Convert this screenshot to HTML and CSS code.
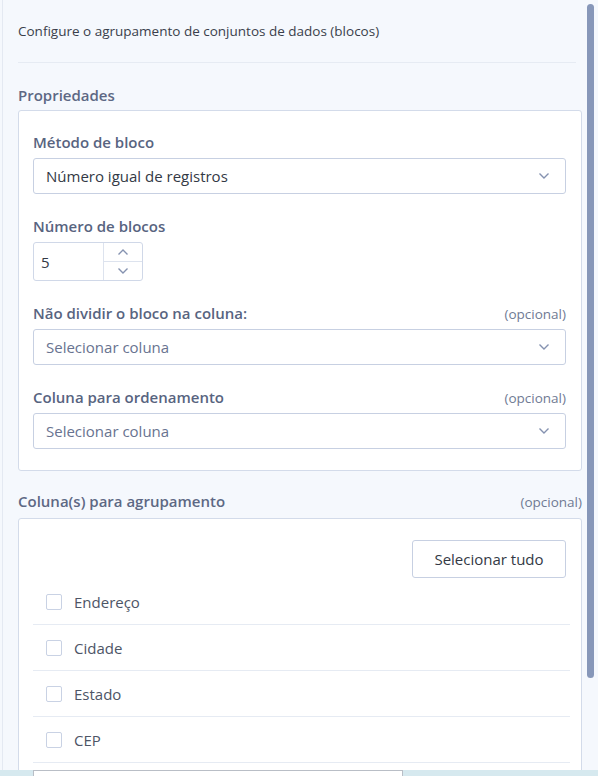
FILE: index.html
```html
<!DOCTYPE html>
<html lang="pt">
<head>
    <meta charset="UTF-8">
    <meta name="viewport" content="width=device-width, initial-scale=1.0">
    <title>Agrupamento em blocos</title>
    <link rel="stylesheet" href="styles.css">
</head>
<body>
    <div class="panel">
        <div class="panel-inner">
            <p class="intro">Configure o agrupamento de conjuntos de dados (blocos)</p>

            <h3 class="section-title">Propriedades</h3>
            <div class="box props">
                <div class="field">
                    <label class="field-label">Método de bloco</label>
                    <div class="select">
                        <span class="select-value">Número igual de registros</span>
                        <svg class="chevron" width="12" height="8" viewBox="0 0 12 8"><path d="M1.5 1.5 L6 6 L10.5 1.5" fill="none" stroke="#8592b0" stroke-width="1.4"/></svg>
                    </div>
                </div>

                <div class="field">
                    <label class="field-label">Número de blocos</label>
                    <div class="spinner">
                        <span class="spinner-value">5</span>
                        <div class="spinner-buttons">
                            <span class="spin-btn"><svg width="12" height="8" viewBox="0 0 12 8"><path d="M1.5 6.5 L6 2 L10.5 6.5" fill="none" stroke="#8592b0" stroke-width="1.4"/></svg></span>
                            <span class="spin-btn"><svg width="12" height="8" viewBox="0 0 12 8"><path d="M1.5 1.5 L6 6 L10.5 1.5" fill="none" stroke="#8592b0" stroke-width="1.4"/></svg></span>
                        </div>
                    </div>
                </div>

                <div class="field">
                    <div class="label-row">
                        <label class="field-label">Não dividir o bloco na coluna:</label>
                        <span class="optional">(opcional)</span>
                    </div>
                    <div class="select">
                        <span class="select-value placeholder">Selecionar coluna</span>
                        <svg class="chevron" width="12" height="8" viewBox="0 0 12 8"><path d="M1.5 1.5 L6 6 L10.5 1.5" fill="none" stroke="#8592b0" stroke-width="1.4"/></svg>
                    </div>
                </div>

                <div class="field">
                    <div class="label-row">
                        <label class="field-label">Coluna para ordenamento</label>
                        <span class="optional">(opcional)</span>
                    </div>
                    <div class="select">
                        <span class="select-value placeholder">Selecionar coluna</span>
                        <svg class="chevron" width="12" height="8" viewBox="0 0 12 8"><path d="M1.5 1.5 L6 6 L10.5 1.5" fill="none" stroke="#8592b0" stroke-width="1.4"/></svg>
                    </div>
                </div>
            </div>

            <div class="label-row group-head">
                <h3 class="section-title">Coluna(s) para agrupamento</h3>
                <span class="optional">(opcional)</span>
            </div>
            <div class="box columns">
                <div class="toolbar">
                    <button class="btn">Selecionar tudo</button>
                </div>
                <ul class="check-list">
                    <li><span class="checkbox"></span>Endereço</li>
                    <li><span class="checkbox"></span>Cidade</li>
                    <li><span class="checkbox"></span>Estado</li>
                    <li><span class="checkbox"></span>CEP</li>
                </ul>
            </div>
        </div>
        <div class="scroll-thumb"></div>
    </div>
    <div class="bottom-bar">
        <div class="bottom-input"></div>
    </div>
</body>
</html>
```

FILE: styles.css
```css
body {
    margin: 0;
    font-family: "Open Sans", "Noto Sans", Arial, sans-serif;
    font-size: 15px;
    line-height: 20px;
    background: #f5f8fd;
    color: #3b4150;
}

.panel {
    position: relative;
    height: 770px;
    overflow: hidden;
    margin-left: 2px;
    border-left: 1px solid #e4e9f2;
}

.panel-inner {
    padding: 0 15px;
    width: 564px;
}

.intro {
    margin: 0;
    padding: 21px 0;
    font-size: 13.5px;
    color: #3a3f4b;
    border-bottom: 1px solid #e6ebf3;
    width: 558px;
}

.section-title {
    margin: 0;
    font-size: 15px;
    font-weight: 600;
    color: #5d6884;
}

.panel-inner > .section-title {
    padding-top: 22px;
    padding-bottom: 5px;
}

.box {
    background: #fff;
    border: 1px solid #d3dbea;
    border-radius: 3px;
}

.props {
    padding: 21px 15px 21px 14px;
}

.field {
    margin-bottom: 22px;
}

.field:last-child {
    margin-bottom: 0;
}

.field-label {
    display: block;
    font-weight: 600;
    color: #58647f;
    margin-bottom: 6px;
}

.label-row {
    display: flex;
    justify-content: space-between;
    align-items: baseline;
}

.optional {
    font-size: 13.5px;
    color: #6f7a93;
}

.select {
    display: flex;
    align-items: center;
    justify-content: space-between;
    box-sizing: border-box;
    height: 36px;
    padding: 0 15px 0 12px;
    border: 1px solid #c7d0e2;
    border-radius: 3px;
    background: #fff;
}

.select-value {
    color: #333945;
}

.select-value.placeholder {
    color: #687390;
}

.spinner {
    display: flex;
    width: 110px;
    height: 39px;
    box-sizing: border-box;
    border: 1px solid #d0d8e8;
    border-radius: 3px;
}

.spinner-value {
    flex: 1;
    display: flex;
    align-items: center;
    padding-left: 7px;
    color: #333945;
}

.spinner-buttons {
    width: 38px;
    display: flex;
    flex-direction: column;
    border-left: 1px solid #dde3ee;
}

.spin-btn {
    flex: 1;
    display: flex;
    align-items: center;
    justify-content: center;
}

.spin-btn + .spin-btn {
    border-top: 1px solid #dde3ee;
}

.group-head {
    padding-top: 20px;
    padding-bottom: 6px;
}

.columns {
    padding: 21px 15px 0 14px;
    height: 300px;
}

.toolbar {
    display: flex;
    justify-content: flex-end;
    margin-bottom: 1px;
}

.btn {
    font-family: inherit;
    font-size: 15px;
    color: #333945;
    background: #fff;
    border: 1px solid #c7d0e2;
    border-radius: 3px;
    height: 38px;
    width: 154px;
    padding: 0;
}

.check-list {
    list-style: none;
    margin: 0;
    padding: 0;
    width: 537px;
}

.check-list li {
    display: flex;
    align-items: center;
    height: 45px;
    padding-left: 13px;
    color: #4d5566;
    border-bottom: 1px solid #e6ebf3;
}

.checkbox {
    width: 14px;
    height: 14px;
    border: 1px solid #c9d2e4;
    border-radius: 2px;
    margin-right: 12px;
}

.scroll-thumb {
    position: absolute;
    top: 4px;
    right: 4px;
    width: 7px;
    height: 674px;
    border-radius: 4px;
    background: #8797b9;
}

.bottom-bar {
    height: 6px;
    background: #d6e9ef;
    padding-left: 33px;
}

.bottom-input {
    width: 370px;
    height: 6px;
    background: #fff;
    border: 1px solid #b9bec6;
    border-bottom: none;
    box-sizing: border-box;
}
```
